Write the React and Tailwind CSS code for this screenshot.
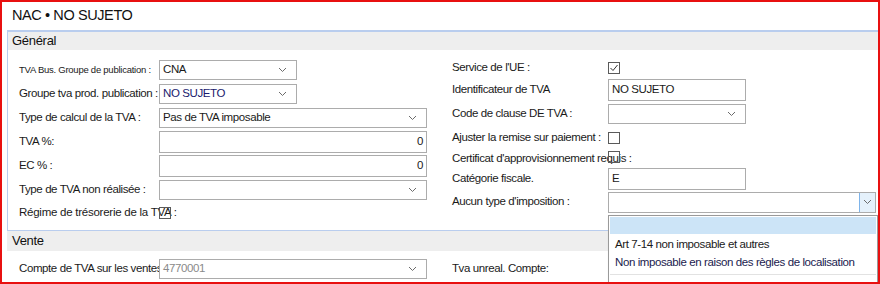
import React from 'react';

const Chevron = () => (
  <svg width="9" height="6" viewBox="0 0 9 6">
    <path d="M1 1 L4.5 4.5 L8 1" fill="none" stroke="#6b6b6b" strokeWidth="1" />
  </svg>
);

const Select = ({ value, w, muted }) => (
  <div className={`h-[20px] ${w} border border-[#acacac] bg-white flex items-center justify-between pl-[3px] pr-[9px]`}>
    <span className={`text-[11.5px] tracking-[-0.4px] ${muted ? 'text-[#8a8a8a]' : 'text-[#1a1a1a]'}`}>{value}</span>
    <Chevron />
  </div>
);

const Input = ({ value, w, right }) => (
  <div className={`h-[22px] ${w} border border-[#acacac] bg-white flex items-center px-[3px] ${right ? 'justify-end' : ''}`}>
    <span className="text-[11.5px] tracking-[-0.4px] text-[#1a1a1a]">{value}</span>
  </div>
);

// checkbox drawn without fill so an overflowing label stays readable through it
const Check = ({ checked }) => (
  <div className="w-[12px] h-[12px] border border-[#5a5a5a] flex items-center justify-center">
    {checked && (
      <svg width="10" height="10" viewBox="0 0 10 10">
        <path d="M1.5 5 L4 7.5 L8.5 2" fill="none" stroke="#333" strokeWidth="1" />
      </svg>
    )}
  </div>
);

// label column overflows under the control, like the original form
const Row = ({ label, h, lw = 'w-[140px]', small, children }) => (
  <div className={`flex items-center ${h}`}>
    <div className={`${lw} shrink-0 whitespace-nowrap text-[#1a1a1a] ${small ? 'text-[9.5px] tracking-[-0.25px]' : 'text-[11.5px] tracking-[-0.4px]'}`}>
      {label}
    </div>
    <div className="relative">{children}</div>
  </div>
);

export default function App() {
  return (
    <div className="relative w-[880px] h-[284px] overflow-hidden bg-white border-2 border-[#e81010] font-['Liberation_Sans',Arial,sans-serif]">
      {/* Title */}
      <div className="h-[28px] flex items-center pl-[10px] text-[14.5px] tracking-[-0.4px] text-[#111]">
        NAC • NO SUJETO
      </div>

      {/* Général */}
      <div className="ml-[5px] border-t-2 border-l border-b border-[#b9cdee]">
        <div className="h-[18px] bg-[#eeeeee] flex items-center pl-[4px] text-[13px] tracking-[-0.3px] text-[#111]">
          Général
        </div>
        <div className="flex pt-[8px] pb-[6px] bg-white">
          <div className="w-[436px] pl-[11px] flex flex-col">
            <Row label="TVA Bus. Groupe de publication :" h="h-[24px]" small>
              <Select value="CNA" w="w-[138px]" />
            </Row>
            <Row label="Groupe tva prod. publication :" h="h-[24px]">
              <Select value={<span className="text-[#1a1a6e]">NO SUJETO</span>} w="w-[138px]" />
            </Row>
            <Row label="Type de calcul de la TVA :" h="h-[24px]">
              <Select value="Pas de TVA imposable" w="w-[268px]" />
            </Row>
            <Row label="TVA %:" h="h-[24px]">
              <Input value="0" w="w-[268px]" right />
            </Row>
            <Row label="EC % :" h="h-[24px]">
              <Input value="0" w="w-[268px]" right />
            </Row>
            <Row label="Type de TVA non réalisée :" h="h-[24px]">
              <Select value="" w="w-[268px]" />
            </Row>
            <div className="relative h-[22px] flex items-center">
              <span className="text-[11.5px] tracking-[-0.25px] text-[#1a1a1a] whitespace-nowrap">Régime de trésorerie de la TVA :</span>
              <div className="absolute left-[140px] top-[5px]"><Check /></div>
            </div>
          </div>
          <div className="flex-1 pl-[8px] flex flex-col">
            <Row label="Service de l'UE :" h="h-[20px]" lw="w-[156px]">
              <Check checked />
            </Row>
            <Row label="Identificateur de TVA" h="h-[24px]" lw="w-[156px]">
              <Input value="NO SUJETO" w="w-[138px]" />
            </Row>
            <Row label="Code de clause DE TVA :" h="h-[24px]" lw="w-[156px]">
              <Select value="" w="w-[138px]" />
            </Row>
            <Row label="Ajuster la remise sur paiement :" h="h-[24px]" lw="w-[156px]">
              <Check />
            </Row>
            <div className="relative h-[18px] flex items-center">
              <span className="text-[11.5px] tracking-[-0.4px] text-[#1a1a1a] whitespace-nowrap">Certificat d'approvisionnement requis :</span>
              <div className="absolute left-[156px] top-[1px]"><Check /></div>
            </div>
            <Row label="Catégorie fiscale." h="h-[22px]" lw="w-[156px]">
              <Input value="E" w="w-[138px]" />
            </Row>
            <Row label="Aucun type d'imposition :" h="h-[24px]" lw="w-[156px]">
              <div className="h-[21px] w-[268px] border border-[#acacac] bg-white flex justify-end">
                <div className="w-[16px] h-full bg-[#e5f1fb] border-l border-[#7eb4ea] flex items-center justify-center">
                  <Chevron />
                </div>
              </div>
            </Row>
          </div>
        </div>
      </div>

      {/* Vente */}
      <div className="ml-[5px] h-[20px] bg-[#eeeeee] flex items-center pl-[5px] text-[13px] tracking-[-0.3px] text-[#111]">
        Vente
      </div>
      <div className="flex pt-[6px]">
        <div className="w-[442px] pl-[17px]">
          <Row label="Compte de TVA sur les ventes :" h="h-[24px]">
            <Select value="4770001" w="w-[268px]" muted />
          </Row>
        </div>
        <div className="flex-1 pl-[8px] flex items-center h-[24px]">
          <span className="text-[11.5px] tracking-[-0.4px] text-[#1a1a1a]">Tva unreal. Compte:</span>
        </div>
      </div>

      {/* Open dropdown list */}
      <div className="absolute left-[606px] top-[213px] w-[270px] h-[80px] bg-white border border-[#9a9a9a] shadow-[2px_2px_3px_rgba(0,0,0,0.25)]">
        <div className="h-[17px] bg-[#cce4f7] mx-[1px] mt-[1px]" />
        <div className="pt-[2px] pl-[6px] flex flex-col">
          <div className="h-[18px] flex items-center text-[11.5px] tracking-[-0.4px] text-[#1a1a1a]">Art 7-14 non imposable et autres</div>
          <div className="h-[18px] flex items-center text-[11.5px] tracking-[-0.4px] text-[#1a1a4e]">Non imposable en raison des règles de localisation</div>
        </div>
        <div className="mx-[1px] mt-[2px] border-t border-[#e2e2e2]" />
      </div>
    </div>
  );
}
